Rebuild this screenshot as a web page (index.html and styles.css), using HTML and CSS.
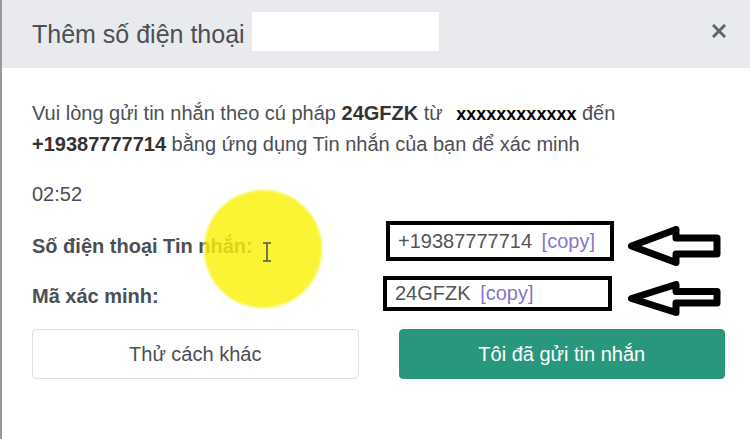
FILE: index.html
```html
<!DOCTYPE html>
<html lang="vi">
<head>
<meta charset="utf-8">
<title>Thêm số điện thoại</title>
<link rel="stylesheet" href="styles.css">
</head>
<body>
<div class="dialog">
  <div class="header">
    <span class="title">Thêm số điện thoại</span>
    <span class="mask"></span>
    <span class="close">
      <svg width="14" height="14" viewBox="0 0 14 14"><path d="M2 2 L12 12 M12 2 L2 12" stroke="#606770" stroke-width="3" stroke-linecap="square"/></svg>
    </span>
  </div>
  <div class="content">
    <p class="intro">Vui lòng gửi tin nhắn theo cú pháp <b>24GFZK</b> từ <b class="hidden-num">xxxxxxxxxxxx</b> đến<br><b>+19387777714</b> bằng ứng dụng Tin nhắn của bạn để xác minh</p>
    <p class="timer">02:52</p>
    <div class="row row-phone">
      <span class="label">Số điện thoại Tin nhắn:</span>
      <span class="value value-phone">+19387777714 <span class="copy">[copy]</span></span>
      <svg class="arrow" width="94" height="40" viewBox="0 0 94 40"><path d="M4.5 20 L49 3.5 L49 12 L90 12 L90 28 L49 28 L49 36.5 Z" fill="#fff" stroke="#000" stroke-width="7" stroke-linejoin="round"/></svg>
    </div>
    <div class="row row-code">
      <span class="label">Mã xác minh:</span>
      <span class="value value-code">24GFZK <span class="copy">[copy]</span></span>
      <svg class="arrow" width="94" height="35" viewBox="0 0 94 35"><path d="M4.5 17.5 L49 3.5 L49 10.5 L90 10.5 L90 22 L49 22 L49 31.5 Z" fill="#fff" stroke="#000" stroke-width="7" stroke-linejoin="round"/></svg>
    </div>
    <div class="actions">
      <button class="btn btn-secondary">Thử cách khác</button>
      <button class="btn btn-primary">Tôi đã gửi tin nhắn</button>
    </div>
  </div>
  <div class="highlight"></div>
  <svg class="ibeam" width="10" height="20" viewBox="0 0 10 20"><path d="M1 1 H9 M5 1 V19 M1 19 H9" stroke="#555" stroke-width="1.6" fill="none"/></svg>
</div>
</body>
</html>
```
FILE: styles.css
```css
* { box-sizing: border-box; }
html, body { margin: 0; padding: 0; background: #fff; }
body {
  font-family: "Liberation Sans", Arial, sans-serif;
  color: #4b4f56;
  width: 750px;
  height: 439px;
  overflow: hidden;
}
.dialog {
  position: relative;
  height: 439px;
  border-left: 2px solid #9a9a9a;
}
.header {
  height: 68px;
  background: #e9eaed;
  display: flex;
  align-items: center;
  padding: 0 24px 0 30px;
}
.title {
  font-size: 25px;
  color: #4b4f56;
}
.mask {
  width: 187px;
  height: 39px;
  background: #fff;
  margin-left: 7px;
  margin-bottom: 5px;
}
.close {
  margin-left: auto;
  margin-bottom: 7px;
  display: flex;
}
.content {
  padding: 30px 25px 0 30px;
}
.intro {
  margin: 0;
  font-size: 20px;
  line-height: 30px;
}
.intro b { color: #333; }
.intro .hidden-num {
  color: #000;
  font-size: 18px;
  margin-left: 8px;
}
.timer {
  margin: 20px 0 0;
  font-size: 20px;
  line-height: 30px;
}
.row {
  display: flex;
  align-items: flex-start;
}
.row-phone { margin-top: 12px; }
.row-code { margin-top: 10px; }
.label {
  align-self: center;
  width: 354px;
  font-size: 20px;
  font-weight: bold;
  color: #4b4f56;
}
.row-phone .label { padding-top: 5px; }
.value {
  border: 4px solid #000;
  display: flex;
  align-items: center;
  padding-left: 8px;
  font-size: 20px;
  color: #555;
  white-space: pre;
}
.value-phone { width: 228px; height: 40px; }
.value-code { width: 229px; height: 35px; margin-left: -3px; }
.copy { color: #8b75c4; margin-left: 4px; }
.arrow {
  margin-left: 13px;
  margin-top: 5px;
}
.value-code + .arrow { margin-left: 15px; }
.actions {
  margin-top: 13px;
  display: grid;
  grid-template-columns: 1fr 1fr;
  gap: 40px;
}
.btn {
  height: 50px;
  border-radius: 4px;
  font-family: "Liberation Sans", Arial, sans-serif;
  font-size: 20px;
}
.btn-secondary {
  background: #fff;
  border: 1px solid #dddfe2;
  color: #4b4f56;
}
.btn-primary {
  background: #29977d;
  border: 1px solid #29977d;
  color: #fff;
}
.highlight {
  position: absolute;
  left: 202px;
  top: 190px;
  width: 118px;
  height: 118px;
  border-radius: 50%;
  background: rgba(250, 242, 9, 0.82);
  filter: blur(1px);
}
.ibeam {
  position: absolute;
  left: 260px;
  top: 242px;
}
```
